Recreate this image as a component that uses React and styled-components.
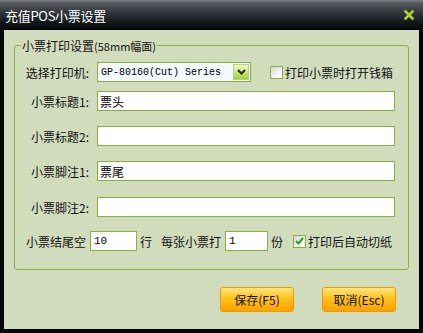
import React from 'react'
import styled, {createGlobalStyle} from 'styled-components'

const GlobalStyle = createGlobalStyle`
  html, body {
    margin: 0;
    padding: 0;
    background: #000;
  }
  body {
    font-family: "Noto Sans CJK SC", "Liberation Sans", sans-serif;
    font-size: 12px;
  }
`

const BG = '#d1dcbd'
const LINE = '#88b03c'

const Window = styled.div`
  width: 423px;
  height: 333px;
  background: #050505;
  display: flex;
  flex-direction: column;
`

const TitleBar = styled.div`
  height: 30px;
  flex: none;
  box-sizing: border-box;
  display: flex;
  align-items: center;
  justify-content: space-between;
  padding: 0 9px 0 5px;
  background: linear-gradient(#80848a 0, #565a5e 3px, #34383c 12px, #15181b 22px, #040506 30px);
  color: #fff;
  font-size: 13px;
`

const Title = styled.span`
  letter-spacing: -0.3px;
  margin-top: 1px;
`

const Body = styled.div`
  flex: 1;
  margin: 0 4px 4px;
  background: ${BG};
  padding: 15px 10px 0;
  display: flex;
  flex-direction: column;
`

const GroupBox = styled.div`
  position: relative;
  border: 1px solid ${LINE};
  border-radius: 3px;
  padding: 16px 0 18px;
  display: flex;
  flex-direction: column;
`

const Legend = styled.div`
  position: absolute;
  top: -8px;
  left: 6px;
  padding: 0 1px;
  background: ${BG};
  line-height: 15px;
  color: #111;
  white-space: nowrap;
`

const LegendNote = styled.span`
  font-size: 11px;
`

const Row = styled.div`
  height: 20px;
  display: flex;
  align-items: center;
  margin-top: ${p => p.$gap || 0}px;
  padding-left: ${p => p.$indent || 0}px;
  color: #111;
`

const Label = styled.span`
  width: 74px;
  margin-right: 8px;
  text-align: right;
  white-space: nowrap;
`

const Text = styled.span`
  white-space: nowrap;
  margin-left: ${p => p.$ml || 0}px;
`

const Field = styled.input`
  width: ${p => p.$w || 298}px;
  height: 20px;
  box-sizing: border-box;
  margin: 0 0 0 ${p => p.$ml || 0}px;
  border: 1px solid ${LINE};
  background: #fff;
  padding: 0 2px;
  font-family: "Noto Sans CJK SC", sans-serif;
  font-size: 12px;
  color: #000;
  outline: none;
`

const NumField = styled(Field)`
  font-family: "Liberation Mono", monospace;
  font-size: 11px;
  padding-left: 3px;
`

const Select = styled.div`
  width: 154px;
  height: 20px;
  box-sizing: border-box;
  border: 1px solid ${LINE};
  background: #f4f8ff;
  display: flex;
  align-items: center;
  justify-content: space-between;
  padding: 0 1px 0 3px;
`

const SelectText = styled.span`
  font-family: "Liberation Mono", monospace;
  font-size: 10px;
  color: #000;
  white-space: nowrap;
`

const DropButton = styled.span`
  width: 16px;
  height: 16px;
  box-sizing: border-box;
  border: 1px solid #b6cf80;
  background: linear-gradient(#f2f9d8, #c4e06c 60%, #a8cf3c);
  display: flex;
  align-items: center;
  justify-content: center;
`

const Check = styled.span`
  width: 13px;
  height: 13px;
  box-sizing: border-box;
  border: 1px solid ${LINE};
  background: linear-gradient(135deg, #d6d6d6, #fbfbfb 80%);
  margin-left: ${p => p.$ml || 0}px;
  margin-right: 2px;
  display: flex;
  align-items: center;
  justify-content: center;
`

const ButtonBar = styled.div`
  display: flex;
  justify-content: flex-end;
  gap: 28px;
  margin-top: 17px;
  padding-right: 13px;
`

const Button = styled.div`
  width: 74px;
  height: 25px;
  box-sizing: border-box;
  border: 1px solid #ec9a00;
  border-radius: 3px;
  background: linear-gradient(#ffe680 0, #ffc21a 45%, #ffa200 100%);
  display: flex;
  align-items: center;
  justify-content: center;
  color: #111;
  font-size: 12px;
  white-space: nowrap;
`

const CheckBox = ({checked, ml}) => (
  <Check $ml={ml}>
    {checked && (
      <svg width="9" height="8" viewBox="0 0 9 8">
        <path d="M1 4 L3.5 6.5 L8 1" fill="none" stroke="#2f9a2a" strokeWidth="2" />
      </svg>
    )}
  </Check>
)

const CloseIcon = () => (
  <svg width="10" height="10" viewBox="0 0 10 10">
    <path d="M1.5 1.5 L8.5 8.5 M8.5 1.5 L1.5 8.5" stroke="#b4d42c" strokeWidth="2.6" strokeLinecap="square" />
  </svg>
)

const fields = [
  {label: '小票标题1:', value: '票头', gap: 9},
  {label: '小票标题2:', value: '', gap: 15},
  {label: '小票脚注1:', value: '票尾', gap: 15},
  {label: '小票脚注2:', value: '', gap: 16}
]

export default function App() {
  return (
    <Window>
      <GlobalStyle />
      <TitleBar>
        <Title>充值POS小票设置</Title>
        <CloseIcon />
      </TitleBar>
      <Body>
        <GroupBox>
          <Legend>
            小票打印设置<LegendNote>(58mm幅面)</LegendNote>
          </Legend>
          <Row>
            <Label>选择打印机:</Label>
            <Select>
              <SelectText>GP-80160(Cut) Series</SelectText>
              <DropButton>
                <svg width="9" height="6" viewBox="0 0 9 6">
                  <path d="M1 1 L4.5 4.5 L8 1" fill="none" stroke="#2a3010" strokeWidth="2" />
                </svg>
              </DropButton>
            </Select>
            <CheckBox ml={19} />
            <Text>打印小票时打开钱箱</Text>
          </Row>
          {fields.map(f => (
            <Row key={f.label} $gap={f.gap}>
              <Label>{f.label}</Label>
              <Field readOnly value={f.value} />
            </Row>
          ))}
          <Row $gap={14} $indent={11}>
            <Text>小票结尾空</Text>
            <NumField readOnly value="10" $w={47} $ml={4} />
            <Text $ml={3}>行</Text>
            <Text $ml={9}>每张小票打</Text>
            <NumField readOnly value="1" $w={43} $ml={4} />
            <Text $ml={3}>份</Text>
            <CheckBox checked ml={10} />
            <Text>打印后自动切纸</Text>
          </Row>
        </GroupBox>
        <ButtonBar>
          <Button>保存(F5)</Button>
          <Button>取消(Esc)</Button>
        </ButtonBar>
      </Body>
    </Window>
  )
}
